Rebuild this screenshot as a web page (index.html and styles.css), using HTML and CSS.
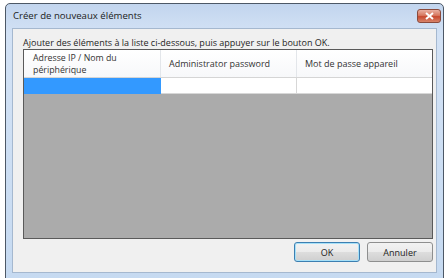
FILE: index.html
```html
<!DOCTYPE html>
<html lang="fr">
<head>
  <meta charset="UTF-8" />
  <title>Créer de nouveaux éléments</title>
  <link rel="stylesheet" href="styles.css">
</head>
<body>

  <div class="fenetre">
    <!-- Barre de titre -->
    <div class="titre">
      <span class="titre-texte">Créer de nouveaux éléments</span>
      <button class="fermer" aria-label="Fermer">
        <svg width="9" height="8" viewBox="0 0 9 8"><path d="M1 1 L8 7 M8 1 L1 7" stroke="#fff" stroke-width="2"/></svg>
      </button>
    </div>

    <!-- Zone client -->
    <div class="client">
      <p class="consigne">Ajouter des éléments à la liste ci-dessous, puis appuyer sur le bouton OK.</p>

      <div class="grille">
        <div class="entete">
          <div class="col c1 deux">
            <span>Adresse IP / Nom du</span>
            <span>périphérique</span>
          </div>
          <div class="col c2">Administrator password</div>
          <div class="col c3">Mot de passe appareil</div>
        </div>
        <div class="ligne">
          <div class="cel c1 choisi"></div>
          <div class="cel c2"></div>
          <div class="cel c3"></div>
        </div>
        <div class="vide"></div>
      </div>

      <div class="actions">
        <button class="btn defaut">OK</button>
        <button class="btn">Annuler</button>
      </div>
    </div>
  </div>

</body>
</html>
```

FILE: styles.css
```css
/* ---------- Base ---------- */
body{
  margin:0;
  background:#fff;
  font-family:"Open Sans",sans-serif;
  font-size:9px;
  color:#1e1e1e;
}

/* ---------- Fenetre ---------- */
.fenetre{
  margin:3px 2px 0 5px;
  height:276px;
  box-sizing:border-box;
  border:1px solid #4d5866;
  border-radius:5px 5px 0 0;
  background:linear-gradient(#c2d5ee,#d3e2f5 30px,#c6daf1);
  padding:0 6px 5px 6px;
  display:flex;
  flex-direction:column;
}

.titre{
  height:24px;
  display:flex;
  align-items:center;
  justify-content:space-between;
}
.titre-texte{font-size:9.6px;color:#1b1b1b;padding-left:1px;margin-top:-1px}
.fermer{
  width:24px;height:14px;
  margin-right:-4px;margin-top:-1px;
  border:1px solid #8a4a3c;
  border-radius:3px;
  background:linear-gradient(#e9b0a2,#d77860 45%,#c7492f 55%,#d8846a);
  display:flex;align-items:center;justify-content:center;
  padding:0;
}

.client{
  flex:1;
  background:#f0f0f0;
  border:1px solid #a5b8cf;
  padding:0 3px 0 10px;
  display:flex;
  flex-direction:column;
}
.consigne{margin:8px 0 1px 0;font-size:9px;line-height:11px}

/* ---------- Grille ---------- */
.grille{
  height:190px;
  box-sizing:border-box;
  border:1px solid #5a5a5a;
  display:flex;
  flex-direction:column;
  background:#ababab;
}
.entete{
  display:flex;
  height:27px;
  background:linear-gradient(#fff,#f7f8fa);
  border-bottom:1px solid #d5d5d5;
}
.col{
  display:flex;
  align-items:center;
  padding-left:8px;
  line-height:12px;
  color:#333;
  border-right:1px solid #e3e6ea;
  box-sizing:border-box;
}
.col.deux{flex-direction:column;align-items:flex-start;justify-content:center;font-size:8.8px;line-height:12px}
.col.c1{padding-left:9px}
.ligne{display:flex;height:16px;background:#fff}
.c1{width:137px;flex:none}
.c2{width:136px;flex:none}
.c3{flex:1}
.col.c3{border-right:0}
.cel{box-sizing:border-box;border-right:1px solid #d7d7d7;border-bottom:1px solid #d7d7d7}
.cel.c3{border-right:0}
.choisi{background:#3399ff;border-color:#3399ff}
.vide{flex:1}

/* ---------- Boutons ---------- */
.actions{
  display:flex;
  justify-content:flex-end;
  gap:7px;
  margin-top:3px;
}
.btn{
  width:66px;height:20px;
  font-family:inherit;font-size:9px;color:#222;
  border:1px solid #8e8f8f;
  border-radius:3px;
  background:linear-gradient(#f2f2f2,#ebebeb 50%,#dddddd 51%,#cfcfcf);
}
.btn.defaut{border-color:#3c7fb1;box-shadow:inset 0 0 0 1px #a6e0f8}
```
